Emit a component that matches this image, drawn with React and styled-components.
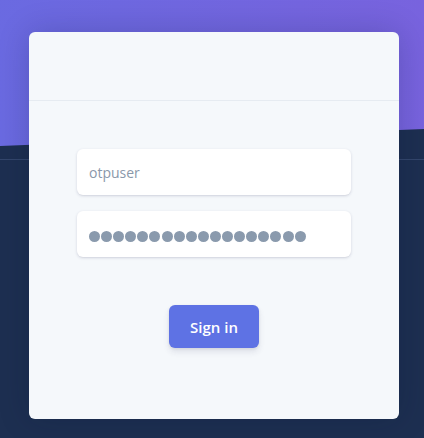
import React from 'react'
import styled, { createGlobalStyle } from 'styled-components'

const Global = createGlobalStyle`
  html, body { margin: 0; padding: 0; }
  body { font-family: "Open Sans", "Liberation Sans", sans-serif; background: #1d2f51; }
`

const Page = styled.div`
  position: relative;
  min-height: 438px;
  box-sizing: border-box;
  padding: 32px 0 0 29px;
  background: #1d2f51;
  overflow: hidden;

  &::before {
    content: '';
    position: absolute;
    left: 0;
    top: 0;
    right: 0;
    height: 146px;
    background: linear-gradient(87deg, #6a6ae1 0%, #7863de 100%);
    clip-path: polygon(0 0, 100% 0, 100% 129px, 0 146px);
  }

  &::after {
    content: '';
    position: absolute;
    left: 0;
    right: 0;
    top: 159px;
    height: 1px;
    background: rgba(120, 140, 190, 0.25);
  }
`

const Card = styled.div`
  position: relative;
  z-index: 1;
  width: 370px;
  height: 387px;
  background: #f5f8fb;
  border-radius: 6px;
  box-shadow: 0 0 32px rgba(10, 20, 50, 0.2);
  display: flex;
  flex-direction: column;
`

const CardHeader = styled.div`
  height: 68px;
  border-bottom: 1px solid #e6ebf1;
`

const CardBody = styled.form`
  padding: 48px 48px 0 48px;
  display: flex;
  flex-direction: column;
  gap: 16px;
`

const Field = styled.div`
  height: 46px;
  background: #fff;
  border-radius: 6px;
  box-shadow: 0 1px 3px rgba(50, 50, 93, 0.18), 0 1px 0 rgba(0, 0, 0, 0.02);
  display: flex;
  align-items: center;
  padding: 0 12px;
`

const Input = styled.input`
  border: 0;
  outline: none;
  background: transparent;
  width: 100%;
  font-family: "Open Sans", "Liberation Sans", sans-serif;
  font-size: 14px;
  color: #525f7f;
  padding: 0;

  &::placeholder { color: #8a98aa; }
`

const Dots = styled.div`
  display: flex;
  gap: 1.1px;
  margin-top: 5px;
`

const Dot = styled.span`
  width: 11px;
  height: 11px;
  border-radius: 50%;
  background: #8a9aad;
`

const Actions = styled.div`
  display: flex;
  justify-content: center;
  margin-top: 32px;
`

const Button = styled.button`
  height: 43px;
  padding: 0 21px;
  border: 0;
  border-radius: 6px;
  background: #5e72e4;
  color: #fff;
  font-family: "Open Sans", "Liberation Sans", sans-serif;
  font-size: 15px;
  font-weight: 600;
  box-shadow: 0 4px 6px rgba(50, 50, 93, 0.11), 0 1px 3px rgba(0, 0, 0, 0.08);
`

export default function App() {
  return (
    <Page>
      <Global />
      <Card>
        <CardHeader />
        <CardBody>
          <Field>
            <Input type="text" placeholder="otpuser" />
          </Field>
          <Field>
            <Dots>
              {Array.from({ length: 18 }).map((_, i) => <Dot key={i} />)}
            </Dots>
          </Field>
          <Actions>
            <Button type="button">Sign in</Button>
          </Actions>
        </CardBody>
      </Card>
    </Page>
  )
}
